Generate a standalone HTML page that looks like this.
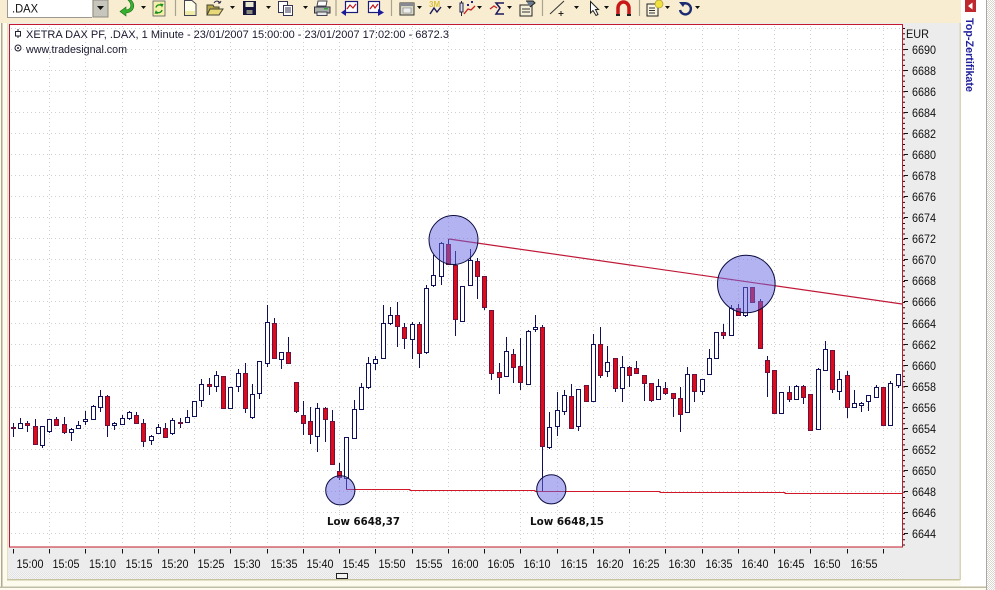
<!DOCTYPE html>
<html><head><meta charset="utf-8"><title>DAX Chart</title>
<style>
html,body{margin:0;padding:0;width:995px;height:590px;overflow:hidden;background:#fff}
svg{display:block}
text{font-family:"Liberation Sans",sans-serif;fill:#111}
</style></head><body>
<svg xmlns="http://www.w3.org/2000/svg" width="995" height="590" viewBox="0 0 995 590">
<defs>
<pattern id="h1" width="2" height="2" patternUnits="userSpaceOnUse"><rect width="2" height="2" fill="#fff"/><rect width="1" height="1" fill="#d8d6ce"/><rect x="1" y="1" width="1" height="1" fill="#d8d6ce"/></pattern>
<pattern id="h2" width="2" height="2" patternUnits="userSpaceOnUse"><rect width="2" height="2" fill="#f4f4f4"/><rect width="1" height="1" fill="#e2e2e2"/><rect x="1" y="1" width="1" height="1" fill="#e2e2e2"/></pattern>
</defs>
<!-- shell -->
<rect width="995" height="590" fill="#fdfbee"/>
<rect x="0" y="0" width="961" height="23" fill="#f8edd0"/>
<rect x="8" y="23" width="952" height="556" fill="#ececec"/>
<rect x="8" y="572" width="895" height="7" fill="url(#h2)"/>
<rect x="1" y="23" width="1.5" height="564" fill="#b0a890"/>
<rect x="7" y="23" width="1" height="557" fill="#e6e0c0"/>
<rect x="7" y="579" width="953" height="1.5" fill="#c8c4a0"/>
<rect x="959.5" y="23" width="1.5" height="557" fill="#d8d4b4"/>
<rect x="0" y="586.5" width="987" height="1.5" fill="#c0bca8"/>
<rect x="961" y="0" width="25" height="586" fill="#fff"/>
<rect x="986" y="0" width="1" height="590" fill="#a8a8a0"/>
<rect x="987" y="0" width="8" height="590" fill="url(#h1)"/>
<!-- side tab -->
<rect x="965" y="0" width="11" height="12" fill="#c02830"/>
<path d="M972.5 2.5V9.5L968 6Z" fill="#fff"/>
<text transform="translate(966 18) rotate(90)" font-size="11" font-weight="700" style="fill:#20209a" textLength="74" lengthAdjust="spacingAndGlyphs">Top-Zertifikate</text>

<!-- chart -->
<rect x="9.5" y="24.5" width="893" height="522.5" fill="#fff"/>
<g stroke="#d0d0d0" stroke-width="1" stroke-dasharray="1 3" fill="none" shape-rendering="crispEdges">
<path d="M11 28.5H902M11 49.5H902M11 70.5H902M11 91.5H902M11 112.5H902M11 133.5H902M11 154.5H902M11 175.5H902M11 196.5H902M11 217.5H902M11 238.5H902M11 259.5H902M11 280.5H902M11 301.5H902M11 323.5H902M11 344.5H902M11 365.5H902M11 386.5H902M11 407.5H902M11 428.5H902M11 449.5H902M11 470.5H902M11 491.5H902M11 512.5H902M11 533.5H902"/>
<path d="M49.5 26V546M85.5 26V546M122.5 26V546M158.5 26V546M194.5 26V546M230.5 26V546M267.5 26V546M303.5 26V546M339.5 26V546M375.5 26V546M412.5 26V546M448.5 26V546M484.5 26V546M520.5 26V546M557.5 26V546M593.5 26V546M629.5 26V546M665.5 26V546M702.5 26V546M738.5 26V546M774.5 26V546M810.5 26V546M847.5 26V546M883.5 26V546"/>
</g>
<!-- wicks -->
<path fill="none" stroke="#101058" stroke-width="1" shape-rendering="crispEdges" d="M13.5 423V437M20.5 418V428M27.5 421V432M35.5 419V444M42.5 426V448M49.5 419V433M56.5 417V425M64.5 417V434M71.5 428V441M78.5 421V428M85.5 411V425M93.5 405V420M100.5 390V412M107.5 395V437M114.5 422V430M122.5 415V424M129.5 411V420M136.5 412V424M143.5 419V447M151.5 435V445M158.5 424V434M165.5 423V438M172.5 418V435M180.5 418V428M187.5 410V423M194.5 401V416M201.5 379V407M209.5 378V395M216.5 371V392M223.5 376V408M230.5 387V408M238.5 369V392M245.5 363V413M252.5 384V419M259.5 361V399M267.5 305V367M274.5 318V358M281.5 352V369M288.5 337V363M296.5 382V413M303.5 401V435M310.5 407V444M317.5 403V452M325.5 407V442M332.5 410V464M339.5 463V480M346.5 437V490M354.5 400V438M361.5 383V409M368.5 357V389M375.5 356V370M383.5 305V358M390.5 307V325M397.5 302V347M404.5 323V349M412.5 322V359M419.5 322V368M426.5 285V354M433.5 255V287M441.5 242V285M448.5 239V264M455.5 251V336M462.5 286V321M470.5 249V285M477.5 258V299M484.5 276V310M491.5 310V380M499.5 363V394M506.5 337V376M513.5 349V383M520.5 338V390M528.5 330V385M535.5 315V332M542.5 325V491M549.5 412V449M557.5 392V436M564.5 390V415M571.5 384V428M578.5 389V431M586.5 385V402M593.5 334V401M600.5 327V378M607.5 346V377M615.5 358V392M622.5 356V402M629.5 366V387M636.5 361V374M644.5 375V401M651.5 383V402M658.5 379V400M665.5 382V395M673.5 393V417M680.5 387V432M687.5 367V412M694.5 374V402M702.5 379V395M709.5 349V374M716.5 332V358M723.5 324V339M731.5 305V335M738.5 304V316M745.5 287V317M752.5 287V302M760.5 299V348M767.5 356V397M774.5 370V413M781.5 392V413M789.5 386V402M796.5 385V400M803.5 385V404M810.5 394V430M818.5 368V429M825.5 341V370M832.5 350V393M839.5 371V400M847.5 371V418M854.5 390V407M861.5 402V412M868.5 395V411M876.5 385V398M883.5 387V425M890.5 381V425M898.5 374V388"/>
<!-- white bodies -->
<path fill="#fff" stroke="#101058" stroke-width="1" shape-rendering="crispEdges" d="M18.500 423.500h4v5h-4zM40.500 426.500h4v19h-4zM47.500 419.500h4v12h-4zM69.500 429.500h4v3h-4zM76.500 425.500h4v3h-4zM83.500 419.500h4v2h-4zM91.500 406.500h4v13h-4zM98.500 396.500h4v11h-4zM112.500 423.500h4v2h-4zM120.500 418.500h4v6h-4zM127.500 412.500h4v6h-4zM149.500 436.500h4v4h-4zM156.500 427.500h4v6h-4zM170.500 420.500h4v13h-4zM185.500 417.500h4v5h-4zM192.500 401.500h4v15h-4zM199.500 384.500h4v16h-4zM214.500 375.500h4v11h-4zM228.500 387.500h4v21h-4zM236.500 373.500h4v13h-4zM250.500 394.500h4v23h-4zM257.500 361.500h4v32h-4zM265.500 322.500h4v41h-4zM279.500 352.500h4v7h-4zM315.500 408.500h4v28h-4zM344.500 437.500h4v41h-4zM352.500 409.500h4v29h-4zM359.500 387.500h4v22h-4zM366.500 363.500h4v24h-4zM373.500 359.500h4v4h-4zM381.500 323.500h4v35h-4zM388.500 315.500h4v8h-4zM410.500 324.500h4v15h-4zM424.500 288.500h4v64h-4zM431.500 275.500h4v10h-4zM439.500 243.500h4v33h-4zM460.500 286.500h4v35h-4zM468.500 260.500h4v25h-4zM504.500 351.500h4v25h-4zM526.500 331.500h4v53h-4zM533.500 327.500h4v2h-4zM547.500 427.500h4v20h-4zM555.500 410.500h4v16h-4zM562.500 395.500h4v16h-4zM576.500 389.500h4v37h-4zM591.500 344.500h4v57h-4zM605.500 362.500h4v9h-4zM620.500 367.500h4v21h-4zM656.500 386.500h4v13h-4zM685.500 374.500h4v38h-4zM700.500 379.500h4v12h-4zM707.500 358.500h4v16h-4zM714.500 332.500h4v26h-4zM729.500 308.500h4v27h-4zM743.500 287.500h4v28h-4zM779.500 392.500h4v21h-4zM794.500 386.500h4v13h-4zM816.500 369.500h4v60h-4zM823.500 349.500h4v21h-4zM837.500 379.500h4v12h-4zM852.500 403.500h4v4h-4zM859.500 403.500h4v2h-4zM866.500 395.500h4v6h-4zM874.500 387.500h4v10h-4zM888.500 383.500h4v42h-4zM896.500 374.500h4v11h-4z"/>
<!-- red bodies -->
<path fill="#dc0c1c" stroke="#6c1040" stroke-width="1" shape-rendering="crispEdges" d="M11.500 427.500h4v1h-4zM25.500 423.500h4v2h-4zM33.500 426.500h4v18h-4zM54.500 419.500h4v6h-4zM62.500 424.500h4v8h-4zM105.500 396.500h4v29h-4zM134.500 415.500h4v8h-4zM141.500 423.500h4v18h-4zM163.500 428.500h4v9h-4zM178.500 422.500h4v1h-4zM207.500 384.500h4v2h-4zM221.500 376.500h4v32h-4zM243.500 373.500h4v35h-4zM272.500 323.500h4v35h-4zM286.500 352.500h4v11h-4zM294.500 382.500h4v29h-4zM301.500 415.500h4v8h-4zM308.500 421.500h4v13h-4zM323.500 408.500h4v11h-4zM330.500 421.500h4v43h-4zM337.500 471.500h4v6h-4zM395.500 315.500h4v11h-4zM402.500 327.500h4v11h-4zM417.500 324.500h4v29h-4zM446.500 244.500h4v20h-4zM453.500 265.500h4v54h-4zM475.500 261.500h4v15h-4zM482.500 276.500h4v31h-4zM489.500 310.500h4v63h-4zM497.500 372.500h4v5h-4zM511.500 354.500h4v13h-4zM518.500 366.500h4v16h-4zM540.500 327.500h4v119h-4zM569.500 396.500h4v32h-4zM584.500 385.500h4v16h-4zM598.500 344.500h4v31h-4zM613.500 358.500h4v30h-4zM627.500 367.500h4v8h-4zM634.500 368.500h4v5h-4zM642.500 375.500h4v8h-4zM649.500 383.500h4v17h-4zM663.500 388.500h4v5h-4zM671.500 393.500h4v5h-4zM678.500 398.500h4v16h-4zM692.500 374.500h4v17h-4zM721.500 332.500h4v3h-4zM736.500 308.500h4v7h-4zM750.500 287.500h4v15h-4zM758.500 301.500h4v47h-4zM765.500 360.500h4v12h-4zM772.500 370.500h4v43h-4zM787.500 392.500h4v7h-4zM801.500 386.500h4v11h-4zM808.500 394.500h4v36h-4zM830.500 350.500h4v39h-4zM845.500 375.500h4v32h-4zM881.500 387.500h4v38h-4z"/>
<!-- trend lines -->
<path d="M449 239L902 304" stroke="#c01838" stroke-width="1.200" fill="none"/>
<path d="M346 489.500H410V490.500H535V491.500H660V492.500H785V493.500H902" stroke="#d01828" stroke-width="1" fill="none" shape-rendering="crispEdges"/>
<!-- circles -->
<g fill="#6868e4" fill-opacity=".5" stroke="#0c0c40" stroke-width="1">
<circle cx="453.500" cy="240" r="24.500"/>
<circle cx="746.300" cy="284" r="28.800"/>
<circle cx="340.300" cy="490.300" r="14.600"/>
<circle cx="551.300" cy="489.300" r="14.600"/>
</g>
<text x="327" y="525" font-size="11" font-weight="700" textLength="73" lengthAdjust="spacingAndGlyphs" style="font-family:'DejaVu Sans',sans-serif">Low 6648,37</text>
<text x="530" y="525" font-size="11" font-weight="700" textLength="74" lengthAdjust="spacingAndGlyphs" style="font-family:'DejaVu Sans',sans-serif">Low 6648,15</text>
<!-- header -->
<path d="M18 29V31M18 36V38" stroke="#223" stroke-width="1"/>
<rect x="15.500" y="31.500" width="5" height="4.500" fill="#fff" stroke="#223"/>
<text x="26" y="38" font-size="11" textLength="423" lengthAdjust="spacingAndGlyphs" style="fill:#1a1a30">XETRA DAX PF, .DAX, 1 Minute - 23/01/2007 15:00:00 - 23/01/2007 17:02:00 - 6872.3</text>
<circle cx="18" cy="48" r="3" fill="none" stroke="#223" stroke-width="1"/><circle cx="18" cy="48" r="1" fill="#223"/>
<text x="26" y="53" font-size="11" textLength="101" lengthAdjust="spacingAndGlyphs" style="fill:#1a1a30">www.tradesignal.com</text>
<!-- border -->
<rect x="9.500" y="24.500" width="893" height="522.500" fill="none" stroke="#c4182c" stroke-width="1" shape-rendering="crispEdges"/>
<!-- right axis -->
<path d="M904 28V546" stroke="#111" stroke-width="2" stroke-dasharray="1 4.270" fill="none"/>
<path fill="none" stroke="#111" shape-rendering="crispEdges" d="M904 49.500h4M904 70.500h4M904 91.500h4M904 112.500h4M904 133.500h4M904 154.500h4M904 175.500h4M904 196.500h4M904 217.500h4M904 238.500h4M904 259.500h4M904 280.500h4M904 301.500h4M904 323.500h4M904 344.500h4M904 365.500h4M904 386.500h4M904 407.500h4M904 428.500h4M904 449.500h4M904 470.500h4M904 491.500h4M904 512.500h4M904 533.500h4"/>
<text x="906" y="38" font-size="12" textLength="23" lengthAdjust="spacingAndGlyphs">EUR</text>
<g font-size="12">
<text x="912" y="54" textLength="24" lengthAdjust="spacingAndGlyphs">6690</text>
<text x="912" y="75" textLength="24" lengthAdjust="spacingAndGlyphs">6688</text>
<text x="912" y="96" textLength="24" lengthAdjust="spacingAndGlyphs">6686</text>
<text x="912" y="117" textLength="24" lengthAdjust="spacingAndGlyphs">6684</text>
<text x="912" y="138" textLength="24" lengthAdjust="spacingAndGlyphs">6682</text>
<text x="912" y="159" textLength="24" lengthAdjust="spacingAndGlyphs">6680</text>
<text x="912" y="180" textLength="24" lengthAdjust="spacingAndGlyphs">6678</text>
<text x="912" y="201" textLength="24" lengthAdjust="spacingAndGlyphs">6676</text>
<text x="912" y="222" textLength="24" lengthAdjust="spacingAndGlyphs">6674</text>
<text x="912" y="243" textLength="24" lengthAdjust="spacingAndGlyphs">6672</text>
<text x="912" y="264" textLength="24" lengthAdjust="spacingAndGlyphs">6670</text>
<text x="912" y="285" textLength="24" lengthAdjust="spacingAndGlyphs">6668</text>
<text x="912" y="306" textLength="24" lengthAdjust="spacingAndGlyphs">6666</text>
<text x="912" y="328" textLength="24" lengthAdjust="spacingAndGlyphs">6664</text>
<text x="912" y="349" textLength="24" lengthAdjust="spacingAndGlyphs">6662</text>
<text x="912" y="370" textLength="24" lengthAdjust="spacingAndGlyphs">6660</text>
<text x="912" y="391" textLength="24" lengthAdjust="spacingAndGlyphs">6658</text>
<text x="912" y="412" textLength="24" lengthAdjust="spacingAndGlyphs">6656</text>
<text x="912" y="433" textLength="24" lengthAdjust="spacingAndGlyphs">6654</text>
<text x="912" y="454" textLength="24" lengthAdjust="spacingAndGlyphs">6652</text>
<text x="912" y="475" textLength="24" lengthAdjust="spacingAndGlyphs">6650</text>
<text x="912" y="496" textLength="24" lengthAdjust="spacingAndGlyphs">6648</text>
<text x="912" y="517" textLength="24" lengthAdjust="spacingAndGlyphs">6646</text>
<text x="912" y="538" textLength="24" lengthAdjust="spacingAndGlyphs">6644</text>
</g>
<!-- time axis -->
<path fill="none" stroke="#111" shape-rendering="crispEdges" d="M13.500 549v4.500M49.500 549v4.500M85.500 549v4.500M122.500 549v4.500M158.500 549v4.500M194.500 549v4.500M230.500 549v4.500M267.500 549v4.500M303.500 549v4.500M339.500 549v4.500M375.500 549v4.500M412.500 549v4.500M448.500 549v4.500M484.500 549v4.500M520.500 549v4.500M557.500 549v4.500M593.500 549v4.500M629.500 549v4.500M665.500 549v4.500M702.500 549v4.500M738.500 549v4.500M774.500 549v4.500M810.500 549v4.500M847.500 549v4.500M883.500 549v4.500"/>
<g font-size="12">
<text x="16.500" y="568" textLength="27" lengthAdjust="spacingAndGlyphs">15:00</text>
<text x="52.500" y="568" textLength="27" lengthAdjust="spacingAndGlyphs">15:05</text>
<text x="89" y="568" textLength="27" lengthAdjust="spacingAndGlyphs">15:10</text>
<text x="125.500" y="568" textLength="27" lengthAdjust="spacingAndGlyphs">15:15</text>
<text x="161.500" y="568" textLength="27" lengthAdjust="spacingAndGlyphs">15:20</text>
<text x="197.500" y="568" textLength="27" lengthAdjust="spacingAndGlyphs">15:25</text>
<text x="233.500" y="568" textLength="27" lengthAdjust="spacingAndGlyphs">15:30</text>
<text x="270.500" y="568" textLength="27" lengthAdjust="spacingAndGlyphs">15:35</text>
<text x="306.500" y="568" textLength="27" lengthAdjust="spacingAndGlyphs">15:40</text>
<text x="342.500" y="568" textLength="27" lengthAdjust="spacingAndGlyphs">15:45</text>
<text x="378.500" y="568" textLength="27" lengthAdjust="spacingAndGlyphs">15:50</text>
<text x="415.500" y="568" textLength="27" lengthAdjust="spacingAndGlyphs">15:55</text>
<text x="451.500" y="568" textLength="27" lengthAdjust="spacingAndGlyphs">16:00</text>
<text x="487.500" y="568" textLength="27" lengthAdjust="spacingAndGlyphs">16:05</text>
<text x="523.500" y="568" textLength="27" lengthAdjust="spacingAndGlyphs">16:10</text>
<text x="560.500" y="568" textLength="27" lengthAdjust="spacingAndGlyphs">16:15</text>
<text x="596.500" y="568" textLength="27" lengthAdjust="spacingAndGlyphs">16:20</text>
<text x="632.500" y="568" textLength="27" lengthAdjust="spacingAndGlyphs">16:25</text>
<text x="668.500" y="568" textLength="27" lengthAdjust="spacingAndGlyphs">16:30</text>
<text x="705.500" y="568" textLength="27" lengthAdjust="spacingAndGlyphs">16:35</text>
<text x="741.500" y="568" textLength="27" lengthAdjust="spacingAndGlyphs">16:40</text>
<text x="777.500" y="568" textLength="27" lengthAdjust="spacingAndGlyphs">16:45</text>
<text x="813.500" y="568" textLength="27" lengthAdjust="spacingAndGlyphs">16:50</text>
<text x="850.500" y="568" textLength="27" lengthAdjust="spacingAndGlyphs">16:55</text>
</g>
<rect x="336.500" y="573.500" width="11" height="5" fill="#f4f4f4" stroke="#222"/>

<!-- toolbar -->
<rect x="8" y="0" width="84" height="17" fill="#fff"/>
<path d="M7.500 0V17.500H92" fill="none" stroke="#9c9a90"/>
<text x="12" y="12.500" font-size="12" textLength="26" lengthAdjust="spacingAndGlyphs" style="fill:#111">.DAX</text>
<rect x="93" y="0" width="15" height="17" fill="#c8c6bc" stroke="#8c8a80"/>
<path d="M97 6h7l-3.500 4z" fill="#111"/>
<path fill="#111" d="M141 6h5l-2.500 3zM230 6h5l-2.500 3zM266 6h5l-2.500 3zM303 6h5l-2.500 3zM417 6h5l-2.500 3zM447 6h5l-2.500 3zM477 6h5l-2.500 3zM507 6h5l-2.500 3zM574 6h5l-2.500 3zM604 6h5l-2.500 3zM665 6h5l-2.500 3zM695 6h5l-2.500 3z"/>
<path d="M175.500 0V16M336 0V16M391.500 0V16M542.500 0V16M639.500 0V16" stroke="#a8a490" stroke-width="1.200"/>
<!-- green arrow -->
<path d="M128 0C132 4 132 9 126 10V7L120 11.500L126 16V13C134 12 136 5 131 0Z" fill="#38b030" stroke="#1c7018" stroke-width=".6"/>
<!-- refresh doc -->
<rect x="153" y="1" width="12" height="15" fill="#f4f0a8" stroke="#556" stroke-width=".8"/>
<path d="M156 7.500a3.500 3.500 0 0 1 5.500-2M162 10a3.500 3.500 0 0 1-5.500 2" fill="none" stroke="#189020" stroke-width="1.400"/>
<path d="M160 3.500L163.500 4L162 7.500ZM158 14L154.500 13.500L156 10Z" fill="#189020"/>
<!-- new -->
<path d="M184.500 0.500H192L196 4V15.500H184.500Z" fill="#fdfde8" stroke="#445"/>
<rect x="185" y="11" width="10" height="4" fill="#f0eca8"/>
<!-- open -->
<path d="M207 15V5H213L214 7H219V15Z" fill="#b8a848" stroke="#443"/>
<path d="M207 15L210 9H223L219 15Z" fill="#e8d878" stroke="#443"/>
<path d="M214 3C216 0 219 1 220 3M220 3L218 3M220 3L221 1" fill="none" stroke="#224" stroke-width=".9"/>
<!-- save -->
<rect x="243" y="1" width="13" height="14" fill="#14143c"/>
<rect x="245.500" y="2" width="8" height="5" fill="#e8e8d0"/>
<rect x="246.500" y="10" width="6" height="4" fill="#8c8c80"/>
<!-- copy -->
<rect x="278.500" y="1.500" width="9" height="11" fill="#fff" stroke="#335"/>
<rect x="283.500" y="5.500" width="9" height="10" fill="#fff" stroke="#335"/>
<path d="M285 8h6M285 10h6M285 12h6" stroke="#335"/>
<!-- printer -->
<path d="M318 1H327L326 6H317Z" fill="#fff" stroke="#445"/>
<path d="M314.500 7H330V13H314.500Z" fill="#a8b0a8" stroke="#334"/>
<rect x="317" y="12" width="10" height="3.500" fill="#e8e8e8" stroke="#445"/>
<rect x="324" y="8" width="4" height="1.500" fill="#40a040"/>
<!-- chart icons -->
<rect x="345.500" y="1.500" width="12" height="11" fill="#fff" stroke="#1a1a7a" stroke-width="1.200"/>
<path d="M347 9L350 5L353 8L356 4" fill="none" stroke="#c01818" stroke-width="1.200"/>
<path d="M346 9L341 12.500L346 16Z" fill="#1a1a9a"/>
<rect x="368.500" y="1.500" width="11" height="11" fill="#fff" stroke="#1a1a7a" stroke-width="1.200"/>
<path d="M370 9L373 5L375 8L378 4" fill="none" stroke="#c01818" stroke-width="1.200"/>
<path d="M378 9L384 12.500L378 16Z" fill="#1a1a9a"/>
<!-- window -->
<rect x="400" y="3" width="14" height="12" fill="#d8d8c8" stroke="#333"/>
<rect x="400" y="3" width="14" height="3" fill="#888890"/>
<path d="M403 8h8v5h-8z" fill="#eee" stroke="#777" stroke-width=".6"/>
<!-- 3M -->
<text x="429" y="7" font-size="8" font-weight="700" style="fill:#d8c040">3M</text>
<path d="M430 14L434 8L437 12L441 7" fill="none" stroke="#1a1a5a" stroke-width="1.400"/>
<!-- candle -->
<path d="M461.500 1V16" stroke="#224"/><rect x="460" y="3" width="3" height="9" fill="#dde" stroke="#224"/>
<path d="M464 14L468 9L471 10L475 6" fill="none" stroke="#c82020" stroke-width="1.300"/>
<path d="M467 4h2v2h-2zM471 1h2v2h-2z" fill="#22228a"/>
<!-- sigma -->
<path d="M490 9L494 6L497 8" fill="none" stroke="#c02020" stroke-width="1.200"/>
<path d="M504 3H496L500 8L496 14H504" fill="none" stroke="#1a1a5a" stroke-width="1.500"/>
<!-- props -->
<rect x="520" y="5" width="12" height="11" fill="#f4f0d8" stroke="#222"/>
<path d="M522 9h8M522 12h8" stroke="#333"/>
<path d="M526 1H533L535 3L530 7" fill="#6a7a8a" stroke="#222"/>
<!-- line tool -->
<path d="M550 14L564 1" stroke="#333" stroke-width="1"/>
<path d="M561 11v5M558.500 13.500h5" stroke="#222" stroke-width="1"/>
<!-- arrow -->
<path d="M590.500 1.500V13L593 10.500L596 15.500L598 14.500L595.500 9.500H598.500Z" fill="#fff" stroke="#222"/>
<!-- magnet -->
<path d="M618 15V8a5.500 6 0 0 1 11 0V15" fill="none" stroke="#c81818" stroke-width="3.500"/>
<path d="M616 15h4M627 15h4" stroke="#222" stroke-width="2"/>
<!-- note bulb -->
<rect x="647" y="4" width="11" height="12" fill="#f8f4e0" stroke="#222"/>
<path d="M649 8h6M649 10.500h6M649 13h6" stroke="#333"/>
<circle cx="659" cy="4" r="4" fill="#f0e040" stroke="#a09020" stroke-width=".6"/>
<!-- undo -->
<path d="M682 4.500A5.500 5.500 0 1 1 680 10" fill="none" stroke="#1c2c70" stroke-width="2.400"/>
<path d="M679 2L686 2L683 7Z" fill="#1c2c70"/>
</svg>
</body></html>
